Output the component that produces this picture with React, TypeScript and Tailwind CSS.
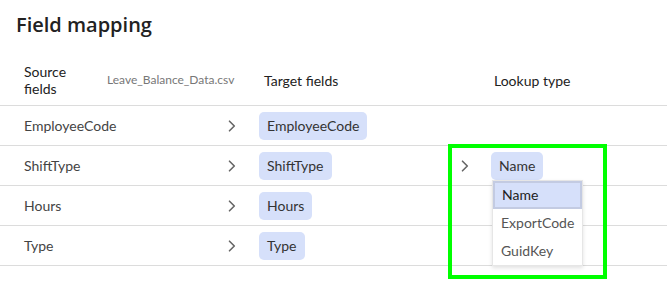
import React from "react";

const Chevron = () => (
  <svg width="8" height="12" viewBox="0 0 8 12" fill="none">
    <path d="M1.5 1.2 L6.3 6 L1.5 10.8" stroke="#666" strokeWidth="1.6" strokeLinecap="round" strokeLinejoin="round" />
  </svg>
);

const Chip = ({ children }: { children: React.ReactNode }) => (
  <span className="inline-flex h-[28px] items-center rounded-[5px] bg-[#d6e0fa] px-[8px] text-[14px] text-[#333]">
    {children}
  </span>
);

const rows = [
  { src: "EmployeeCode", target: "EmployeeCode", lookup: false },
  { src: "ShiftType", target: "ShiftType", lookup: true },
  { src: "Hours", target: "Hours", lookup: false },
  { src: "Type", target: "Type", lookup: false },
];

export default function App() {
  return (
    <div className="relative h-[291px] w-[667px] bg-white text-[#333]" style={{ fontFamily: "Lato, 'Noto Sans', sans-serif" }}>
      <div className="px-[16px] pt-[11px] text-[20px] font-semibold leading-[28px] text-[#222]" style={{ fontFamily: "'Open Sans', sans-serif" }}>Field mapping</div>
      <div className="mt-[16px] flex h-[51px] items-center border-b border-[#dcdcdc] pl-[24px] text-[14px] text-[#222]">
        <div className="w-[83px] leading-[17px]">Source<br />fields</div>
        <div className="w-[157px] text-[12px] text-[#777]">Leave_Balance_Data.csv</div>
        <div className="w-[230px]">Target fields</div>
        <div>Lookup type</div>
      </div>
      {rows.map((r) => (
        <div key={r.src} className="flex h-[40px] items-center border-b border-[#dcdcdc] pl-[24px] text-[14px] text-[#444]">
          <div className="w-[204px]">{r.src}</div>
          <div className="flex w-[31px] items-center"><Chevron /></div>
          <div className="w-[202px]"><Chip>{r.target}</Chip></div>
          {r.lookup && (
            <>
              <div className="flex w-[30px] items-center"><Chevron /></div>
              <div className="relative">
                <Chip>Name</Chip>
                <div className="absolute left-[1px] top-[28px] z-10 w-[91px] border border-[#e6e6e6] bg-white shadow-[0_2px_4px_rgba(0,0,0,0.12)]">
                  <div className="flex h-[28px] items-center border-2 border-[#c3cbe2] bg-[#d6e0fa] pl-[7px] text-[14px] text-[#222]">Name</div>
                  <div className="flex h-[28px] items-center pl-[8px] text-[14px] text-[#555]">ExportCode</div>
                  <div className="flex h-[28px] items-center pl-[8px] text-[14px] text-[#555]">GuidKey</div>
                </div>
              </div>
            </>
          )}
        </div>
      ))}
      <div className="pointer-events-none absolute left-[448px] top-[144px] h-[135px] w-[159px] border-[4px] border-[#00ff00]" />
    </div>
  );
}
